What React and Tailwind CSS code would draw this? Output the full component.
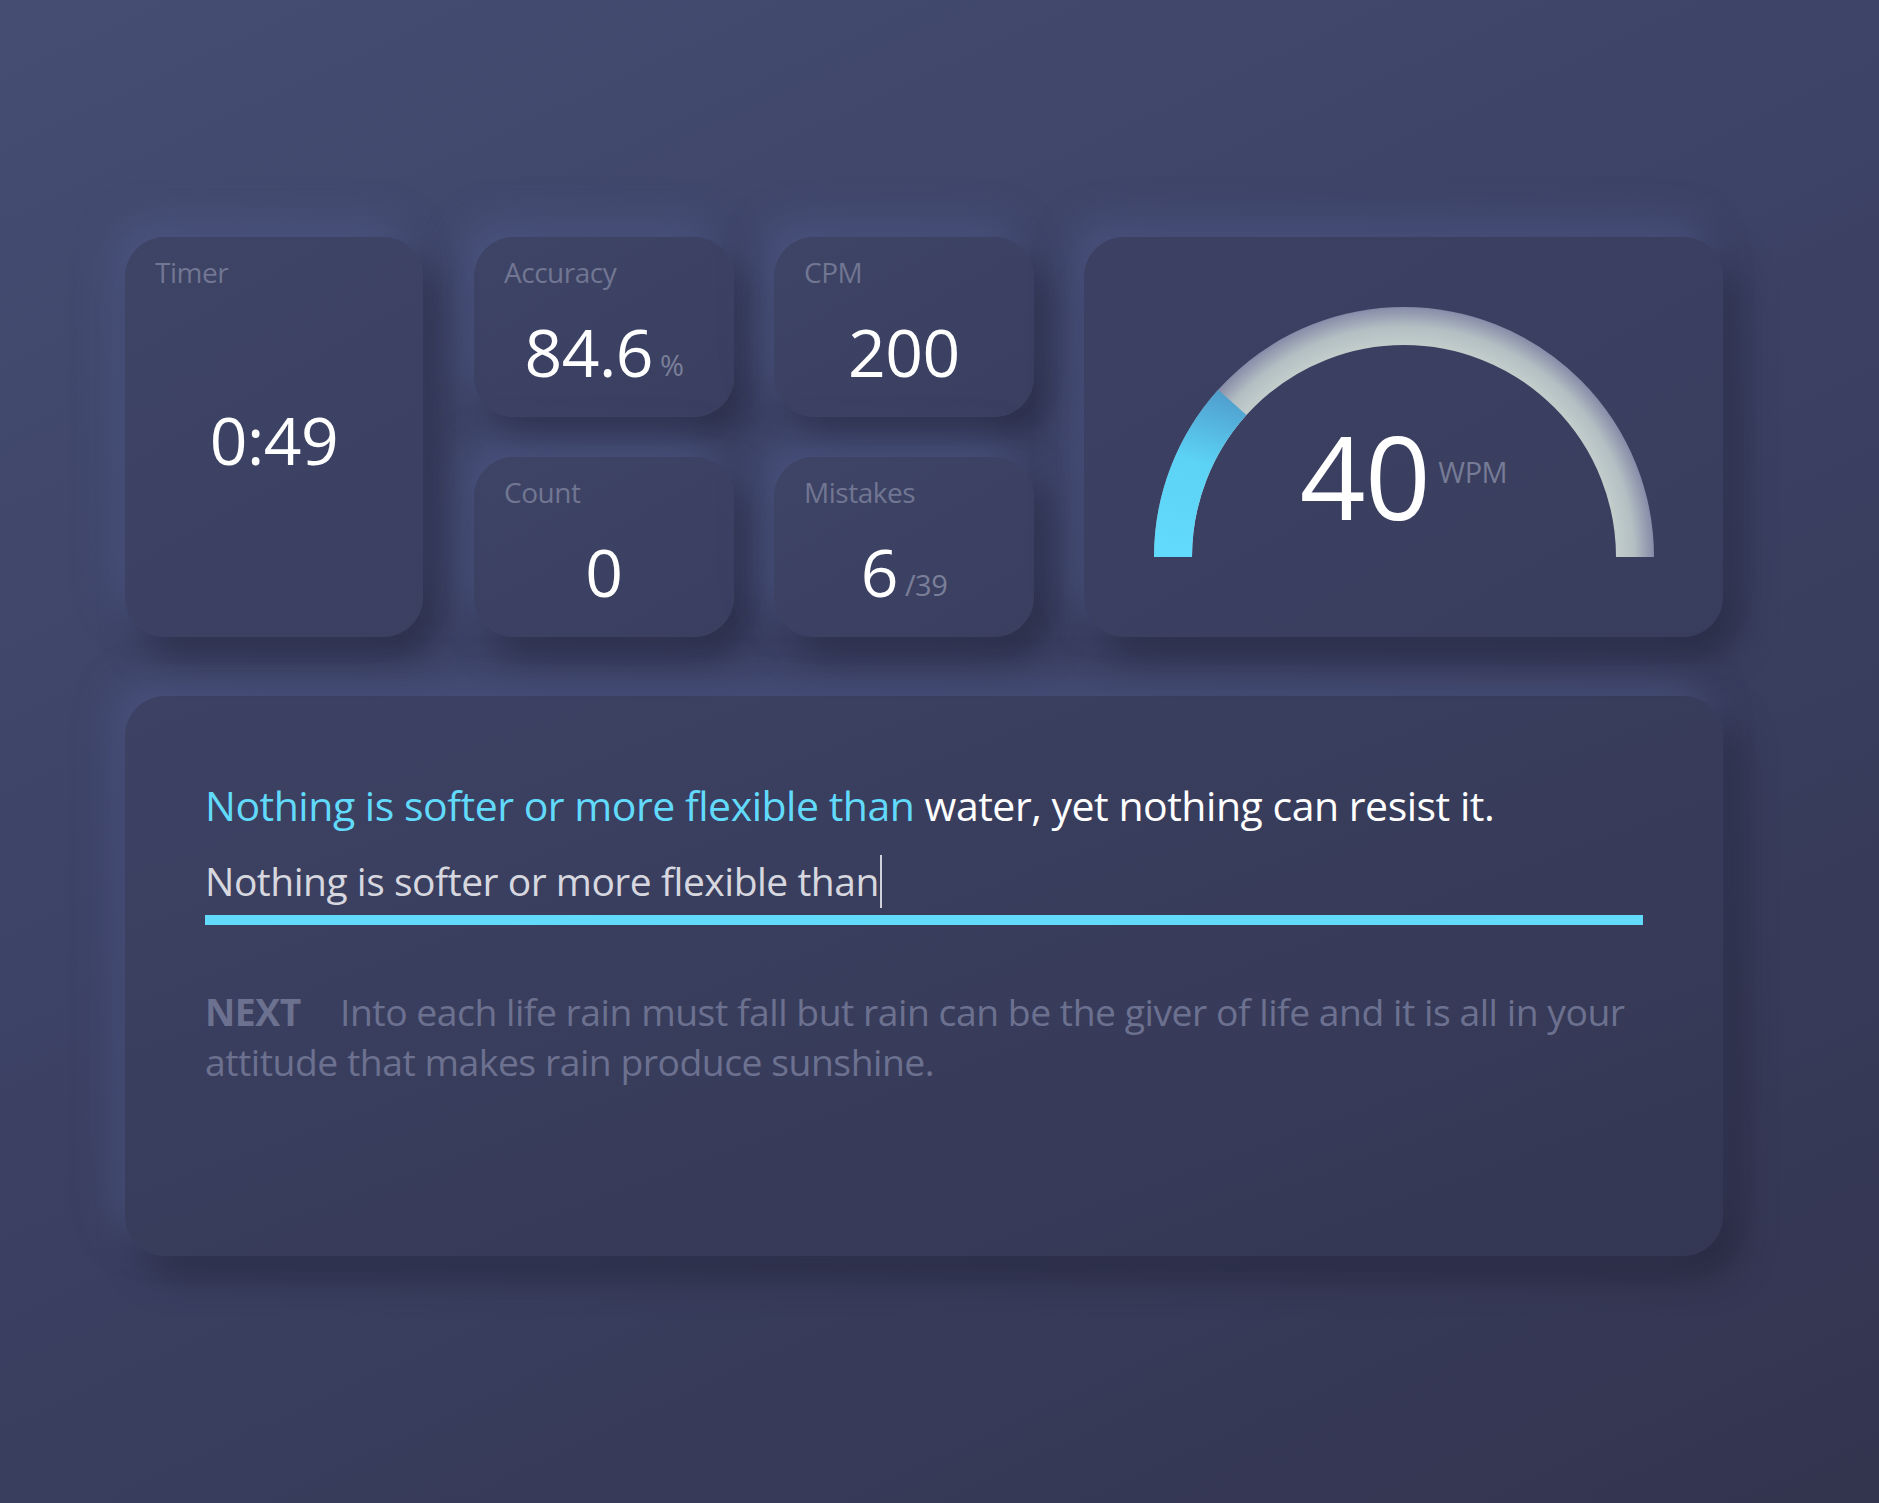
import React from "react";

const cardShadow =
  "shadow-[-12px_-16px_36px_rgba(82,92,142,0.55),14px_18px_36px_rgba(30,32,50,0.6)]";

const StatCard = ({ label, value, unit, className = "" }) => {
  return (
    <div
      className={`flex flex-col rounded-[40px] bg-[linear-gradient(150deg,#3e4466,#3a3f60)] pl-[30px] pt-[18px] ${cardShadow} ${className}`}
    >
      <div className="text-[28px] leading-[35px] text-[#717692]">{label}</div>
      <div className="flex flex-1 items-center justify-center pb-[6px] pr-[30px]">
        <span className="text-[66px] leading-none text-white">{value}</span>
        {unit && (
          <span className="ml-[7px] self-center pt-[27px] text-[29px] leading-none text-[#7a7f99]">
            {unit}
          </span>
        )}
      </div>
    </div>
  );
};

const Gauge = () => {
  // semicircle, center (250,250), stroke radius 231
  return (
    <svg width="500" height="250" viewBox="0 0 500 250">
      <defs>
        <radialGradient id="track" gradientUnits="userSpaceOnUse" cx="250" cy="250" r="250">
          <stop offset="0.84" stopColor="#c3cecc" />
          <stop offset="0.92" stopColor="#b4bfc3" />
          <stop offset="1" stopColor="#868ca8" />
        </radialGradient>
        <linearGradient id="fill" gradientUnits="userSpaceOnUse" x1="40" y1="250" x2="90" y2="90">
          <stop offset="0" stopColor="#62dafc" />
          <stop offset="0.55" stopColor="#5cd2f4" />
          <stop offset="1" stopColor="#4f9ccb" />
        </linearGradient>
      </defs>
      <path d="M 19 250 A 231 231 0 0 1 481 250" fill="none" stroke="url(#track)" strokeWidth="38" />
      <path d="M 19 250 A 231 231 0 0 1 78.3 95.4" fill="none" stroke="url(#fill)" strokeWidth="38" />
    </svg>
  );
};

const App = () => {
  const done = "Nothing is softer or more flexible than";
  const rest = " water, yet nothing can resist it.";

  return (
    <div className="min-h-screen w-full bg-[linear-gradient(155deg,#454d72_0%,#3d4367_40%,#33354f_100%)] pl-[125px] pt-[237px] pb-[247px] font-['Open_Sans','Noto_Sans',sans-serif] tracking-[-0.03em]">
      <div className="w-[1598px]">
        {/* stats row */}
        <div className="flex h-[400px]">
          <div
            className={`relative flex w-[298px] flex-col rounded-[40px] bg-[linear-gradient(150deg,#3e4466,#3b4061)] pl-[30px] pt-[18px] ${cardShadow}`}
          >
            <div className="text-[28px] leading-[35px] text-[#717692]">Timer</div>
            <div className="flex flex-1 items-center justify-center pb-[50px] pr-[30px]">
              <span className="text-[66px] leading-none text-white">0:49</span>
            </div>
          </div>

          <div className="ml-[51px] grid w-[560px] grid-cols-2 grid-rows-2 gap-x-[40px] gap-y-[40px]">
            <StatCard label="Accuracy" value="84.6" unit="%" />
            <StatCard label="CPM" value="200" />
            <StatCard label="Count" value="0" />
            <StatCard label="Mistakes" value="6" unit="/39" />
          </div>

          <div
            className={`relative ml-[50px] flex w-[639px] justify-center rounded-[40px] bg-[linear-gradient(150deg,#3c4164,#393d5d)] pt-[70px] ${cardShadow}`}
          >
            <div className="h-[250px]">
              <Gauge />
            </div>
            <div className="absolute left-0 right-0 top-[181px] flex items-start justify-center">
              <span className="text-[115px] leading-none text-white">40</span>
              <span className="ml-[8px] mt-[39px] text-[29px] leading-none text-[#767b96]">WPM</span>
            </div>
          </div>
        </div>

        {/* text card */}
        <div
          className={`mt-[59px] h-[560px] rounded-[40px] bg-[linear-gradient(160deg,#3d4264,#343753)] px-[80px] pt-[83px] ${cardShadow}`}
        >
          <div className="text-[41px] leading-[52px]">
            <span className="text-[#61dafb]">{done}</span>
            <span className="text-white">{rest}</span>
          </div>
          <div className="mt-[22px] border-b-[10px] border-[#61dafb] pb-[6px]">
            <div className="flex h-[56px] items-center text-[39px] leading-[56px] text-[#d6d7df]">
              <span>{done}</span>
              <span className="ml-[1px] inline-block h-[53px] w-[2px] bg-[#d0d1da]" />
            </div>
          </div>
          <p className="mt-[62px] text-[37.3px] leading-[50px] text-[#6c7190]">
            <span className="mr-[30px] font-bold">NEXT</span> Into each life rain must fall but rain can
            be the giver of life and it is all in your attitude that makes rain produce sunshine.
          </p>
        </div>
      </div>
    </div>
  );
};

export default App;
